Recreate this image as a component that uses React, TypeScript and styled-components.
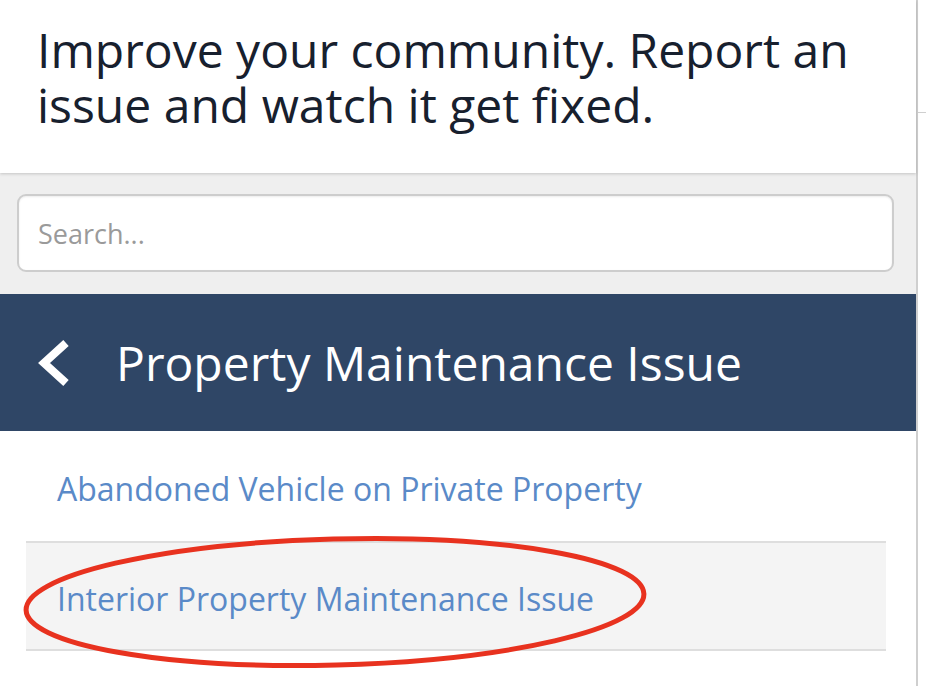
import React from "react";
import styled, { createGlobalStyle } from "styled-components";

const Global = createGlobalStyle`
  html, body { margin: 0; padding: 0; background: #ffffff; }
  body { font-family: "Open Sans", "Liberation Sans", sans-serif; width: 926px; height: 686px; overflow: hidden; }
`;

const Page = styled.div`
  display: flex;
  width: 926px;
  height: 686px;
  overflow: hidden;
`;

const Panel = styled.div`
  width: 916px;
  flex: none;
  display: flex;
  flex-direction: column;
  border-right: 2px solid #cfcfcf;
  background: #ffffff;
`;

const Side = styled.div`
  flex: 1;
  padding-top: 112px;
`;

const SideRule = styled.div`
  height: 1px;
  background: #cfcfcf;
`;

const Header = styled.header`
  height: 173px;
  box-sizing: border-box;
  padding: 22px 37px 0;
  background: #ffffff;
  box-shadow: 0 1px 3px rgba(0, 0, 0, 0.18);
  position: relative;
  z-index: 1;
`;

const Title = styled.h1`
  margin: 0;
  font-weight: 400;
  font-size: 48px;
  line-height: 55px;
  color: #17202e;
`;

const SearchArea = styled.div`
  background: #efefef;
  padding: 21px 22px 22px 17px;
`;

const SearchInput = styled.input`
  display: block;
  width: 100%;
  height: 78px;
  box-sizing: border-box;
  border: 2px solid #cdcdcd;
  border-radius: 9px;
  background: #ffffff;
  padding: 0 19px;
  font-family: "Open Sans", "Liberation Sans", sans-serif;
  font-size: 27px;
  color: #333;
  box-shadow: inset 0 1px 2px rgba(0, 0, 0, 0.08);
  outline: none;
  &::placeholder { color: #9a9a9a; }
`;

const CategoryBar = styled.div`
  height: 137px;
  background: #2f4666;
  display: flex;
  align-items: center;
  padding-left: 38px;
  gap: 46px;
  color: #ffffff;
`;

const BarTitle = styled.h2`
  margin: 0;
  font-weight: 400;
  font-size: 48px;
  color: #ffffff;
`;

const List = styled.ul`
  list-style: none;
  margin: 0;
  padding: 0 30px 0 26px;
`;

const Item = styled.li<{ $shaded?: boolean }>`
  position: relative;
  height: 110px;
  display: flex;
  align-items: center;
  padding: 4px 0 0 31px;
  background: ${(p) => (p.$shaded ? "#f4f4f4" : "transparent")};
  border-top: 2px solid ${(p) => (p.$shaded ? "#dedede" : "transparent")};
  border-bottom: 2px solid ${(p) => (p.$shaded ? "#dedede" : "transparent")};
  box-sizing: border-box;
`;

const ItemLink = styled.a`
  font-size: 32px;
  color: #5a8ac8;
  text-decoration: none;
`;

const Circle = styled.svg`
  position: absolute;
  left: -6px;
  top: -8px;
  overflow: visible;
  pointer-events: none;
`;

const Chevron = () => (
  <svg width="32" height="46" viewBox="0 0 32 46">
    <polyline points="28,3 6,23 28,43" fill="none" stroke="#ffffff" strokeWidth="8" strokeLinecap="butt" strokeLinejoin="miter" />
  </svg>
);

export default function App() {
  return (
    <>
      <Global />
      <Page>
        <Panel>
          <Header>
            <Title>Improve your community. Report an issue and watch it get fixed.</Title>
          </Header>
          <SearchArea>
            <SearchInput placeholder="Search..." />
          </SearchArea>
          <CategoryBar>
            <Chevron />
            <BarTitle>Property Maintenance Issue</BarTitle>
          </CategoryBar>
          <List>
            <Item>
              <ItemLink href="#">Abandoned Vehicle on Private Property</ItemLink>
            </Item>
            <Item $shaded>
              <ItemLink href="#">Interior Property Maintenance Issue</ItemLink>
              <Circle width="630" height="134" viewBox="0 0 630 134">
                <ellipse cx="315" cy="67" rx="309" ry="63" fill="none" stroke="#e8321f" strokeWidth="5" transform="rotate(-1.5 315 67)" />
              </Circle>
            </Item>
          </List>
        </Panel>
        <Side>
          <SideRule />
        </Side>
      </Page>
    </>
  );
}
